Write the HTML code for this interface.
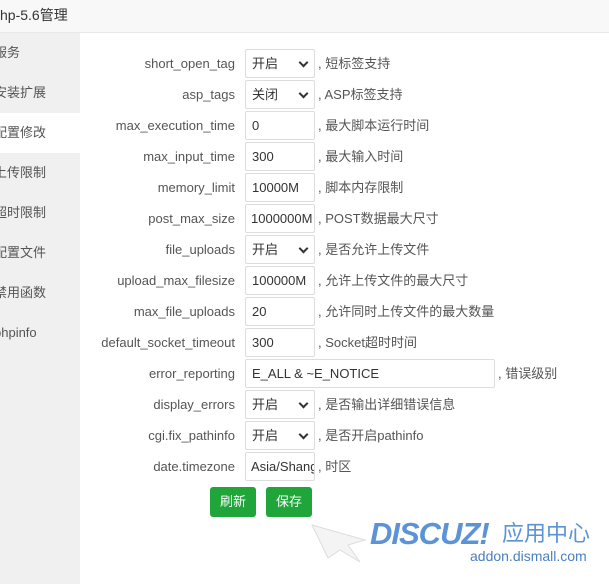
<!DOCTYPE html>
<html><head><meta charset="utf-8"><style>
*{margin:0;padding:0;box-sizing:border-box}
body{width:609px;height:584px;overflow:hidden;background:#fff;font-family:"Liberation Sans","Noto Sans CJK SC",sans-serif;font-size:13px;color:#333;position:relative}
.title{position:absolute;left:0;top:0;width:609px;height:33px;background:#f8f8f8;border-bottom:1px solid #e8e8e8;font-size:14px;line-height:30px;padding-left:0;color:#333}
.side{position:absolute;left:0;top:33px;width:80px;height:551px;background:#f0f0f0}
.side div{height:40px;line-height:40px;font-size:13px;color:#555;white-space:nowrap;overflow:hidden;text-indent:-6px}
.side div.act{background:#fff}
.row{position:absolute;left:80px;height:29px;width:529px}
.lbl{position:absolute;right:374px;top:0;line-height:29px;color:#555;white-space:nowrap}
.box{position:absolute;left:165px;top:0;width:70px;height:29px;border:1px solid #ddd;border-radius:2px;line-height:27px;padding-left:6px;white-space:nowrap;overflow:hidden;color:#333}
.box.sel::after{content:"";position:absolute;right:7px;top:9px;width:5px;height:5px;border-right:2px solid #333;border-bottom:2px solid #333;transform:rotate(45deg)}
.desc{position:absolute;top:0;line-height:29px;white-space:nowrap;color:#555}
.btn{position:absolute;top:487px;width:46px;height:30px;background:#20a53a;color:#fff;border-radius:3px;text-align:center;line-height:30px;font-size:13px}
</style></head><body>
<div class="title">hp-5.6管理</div>
<div class="side">
<div>服务</div><div>安装扩展</div><div class="act">配置修改</div><div>上传限制</div><div>超时限制</div><div>配置文件</div><div>禁用函数</div><div>phpinfo</div>
</div>

<div class="row" style="top:49px"><span class="lbl">short_open_tag</span><span class="box sel">开启</span><span class="desc" style="left:238px">, 短标签支持</span></div>
<div class="row" style="top:80px"><span class="lbl">asp_tags</span><span class="box sel">关闭</span><span class="desc" style="left:238px">, ASP标签支持</span></div>
<div class="row" style="top:111px"><span class="lbl">max_execution_time</span><span class="box">0</span><span class="desc" style="left:238px">, 最大脚本运行时间</span></div>
<div class="row" style="top:142px"><span class="lbl">max_input_time</span><span class="box">300</span><span class="desc" style="left:238px">, 最大输入时间</span></div>
<div class="row" style="top:173px"><span class="lbl">memory_limit</span><span class="box">10000M</span><span class="desc" style="left:238px">, 脚本内存限制</span></div>
<div class="row" style="top:204px"><span class="lbl">post_max_size</span><span class="box" style="padding-left:5px">1000000M</span><span class="desc" style="left:238px">, POST数据最大尺寸</span></div>
<div class="row" style="top:235px"><span class="lbl">file_uploads</span><span class="box sel">开启</span><span class="desc" style="left:238px">, 是否允许上传文件</span></div>
<div class="row" style="top:266px"><span class="lbl">upload_max_filesize</span><span class="box">100000M</span><span class="desc" style="left:238px">, 允许上传文件的最大尺寸</span></div>
<div class="row" style="top:297px"><span class="lbl">max_file_uploads</span><span class="box">20</span><span class="desc" style="left:238px">, 允许同时上传文件的最大数量</span></div>
<div class="row" style="top:328px"><span class="lbl">default_socket_timeout</span><span class="box">300</span><span class="desc" style="left:238px">, Socket超时时间</span></div>
<div class="row" style="top:359px"><span class="lbl">error_reporting</span><span class="box" style="width:250px">E_ALL &amp; ~E_NOTICE</span><span class="desc" style="left:418px">, 错误级别</span></div>
<div class="row" style="top:390px"><span class="lbl">display_errors</span><span class="box sel">开启</span><span class="desc" style="left:238px">, 是否输出详细错误信息</span></div>
<div class="row" style="top:421px"><span class="lbl">cgi.fix_pathinfo</span><span class="box sel">开启</span><span class="desc" style="left:238px">, 是否开启pathinfo</span></div>
<div class="row" style="top:452px"><span class="lbl">date.timezone</span><span class="box" style="padding-left:5px">Asia/Shanghai</span><span class="desc" style="left:238px">, 时区</span></div>

<div class="btn" style="left:210px">刷新</div>
<div class="btn" style="left:266px">保存</div>

<svg style="position:absolute;left:310px;top:520px" width="60" height="45"><polygon points="2,5 55,20 38,25 50,42 30,30 18,38" fill="#f4f4f4" stroke="#ddd"/></svg>
<div style="position:absolute;left:370px;top:516px;font-size:31px;font-weight:bold;font-style:italic;color:#5b93d6;letter-spacing:-1px;font-family:'Liberation Sans',sans-serif">DISCUZ!</div>
<div style="position:absolute;left:502px;top:519px;font-size:22px;color:#5b93d6;font-family:'Noto Sans CJK SC',sans-serif;line-height:26px">应用中心</div>
<div style="position:absolute;left:470px;top:548px;font-size:14px;color:#4a7fc0">addon.dismall.com</div>
</body></html>
